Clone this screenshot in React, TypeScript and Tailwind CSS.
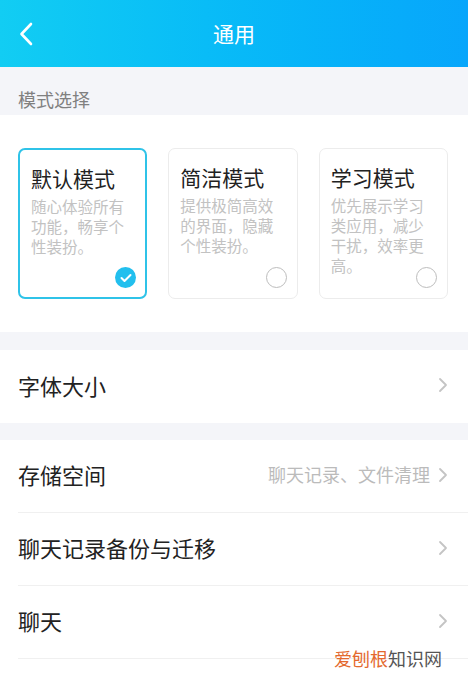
import React from "react";

const font = { fontFamily: '"Noto Sans CJK SC", "Noto Sans", sans-serif' };

function Chevron() {
  return (
    <svg width="10" height="16" viewBox="0 0 10 16" fill="none">
      <path d="M2 2 L8 8 L2 14" stroke="#c4c4c4" strokeWidth="1.8" strokeLinecap="round" strokeLinejoin="round" />
    </svg>
  );
}

function Card({ title, lines, active }: { title: string; lines: string[]; active?: boolean }) {
  return (
    <div
      className={
        "relative h-[151px] rounded-[7px] bg-white px-[11px] pt-[13px] " +
        (active ? "border-2 border-[#2fc3e8]" : "border border-[#ececec]")
      }
    >
      <div className="text-[21px] leading-[30px] text-[#222]">{title}</div>
      <div className="mt-[3px] text-[15.5px] leading-[20px] text-[#c2c2c2]">
        {lines.map((l, i) => (
          <div key={i} className="whitespace-nowrap">{l}</div>
        ))}
      </div>
      {active ? (
        <div className="absolute bottom-[9px] right-[9px] flex h-[21px] w-[21px] items-center justify-center rounded-full bg-[#22bfee]">
          <svg width="12" height="10" viewBox="0 0 12 10" fill="none">
            <path d="M1.5 5 L4.5 8 L10.5 2" stroke="white" strokeWidth="2" strokeLinecap="round" strokeLinejoin="round" />
          </svg>
        </div>
      ) : (
        <div className="absolute bottom-[10px] right-[10px] h-[21px] w-[21px] rounded-full border-[1.5px] border-[#bdbdbd]" />
      )}
    </div>
  );
}

function Row({ label, right }: { label: string; right?: string }) {
  return (
    <div className="pl-[18px]">
      <div className="flex h-[73px] items-center justify-between border-b border-[#f0f0f0] pb-[3px] pr-[20px]">
        <span className="text-[22px] text-[#222]">{label}</span>
        <div className="flex items-center gap-[8px]">
          {right && <span className="text-[18px] text-[#bbbbbb]">{right}</span>}
          <Chevron />
        </div>
      </div>
    </div>
  );
}

export default function App() {
  return (
    <div className="relative h-[679px] w-[468px] overflow-hidden bg-white" style={font}>
      <div className="relative flex h-[67px] items-center justify-center bg-gradient-to-r from-[#12cdf3] to-[#08a6fb]">
        <svg className="absolute left-[19px] top-[22px]" width="14" height="24" viewBox="0 0 14 24" fill="none">
          <path d="M12 2 L2.5 12 L12 22" stroke="white" strokeWidth="2.6" strokeLinecap="round" strokeLinejoin="round" />
        </svg>
        <span className="text-[21px] text-white">通用</span>
      </div>
      <div className="h-[48px] bg-[#f4f5f9] pl-[18px] pt-[20px] text-[18px] leading-[24px] text-[#808080]">模式选择</div>
      <div className="grid grid-cols-3 gap-[21px] bg-white pb-[33px] pl-[18px] pr-[20px] pt-[33px]">
        <Card title="默认模式" lines={["随心体验所有", "功能，畅享个", "性装扮。"]} active />
        <Card title="简洁模式" lines={["提供极简高效", "的界面，隐藏", "个性装扮。"]} />
        <Card title="学习模式" lines={["优先展示学习", "类应用，减少", "干扰，效率更", "高。"]} />
      </div>
      <div className="h-[18px] bg-[#f4f5f9]" />
      <div className="pl-[18px]">
        <div className="flex h-[73px] items-center justify-between pb-[3px] pr-[20px]">
          <span className="text-[22px] text-[#222]">字体大小</span>
          <Chevron />
        </div>
      </div>
      <div className="h-[17px] bg-[#f4f5f9]" />
      <Row label="存储空间" right="聊天记录、文件清理" />
      <Row label="聊天记录备份与迁移" />
      <Row label="聊天" />
      <div className="absolute bottom-[10px] right-[26px] text-[18px] leading-[22px]">
        <span className="text-[#e4692e]">爱刨根</span>
        <span className="text-[#555]">知识网</span>
      </div>
    </div>
  );
}
